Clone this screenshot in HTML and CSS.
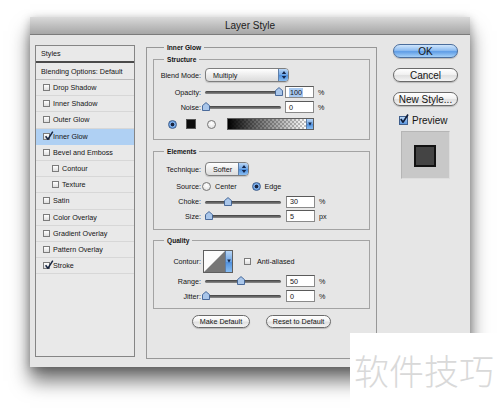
FILE: index.html
```html
<!DOCTYPE html>
<html>
<head>
<meta charset="utf-8">
<title>Layer Style</title>
<link rel="stylesheet" href="styles.css">
</head>
<body>
<div class="window">
  <div class="titlebar">Layer Style</div>
  <div class="content">
    <div class="styles-list">
      <div class="list-head">Styles</div>
      <div class="list-row blend">Blending Options: Default</div>
      <div class="list-row"><span class="cb"></span>Drop Shadow</div>
      <div class="list-row"><span class="cb"></span>Inner Shadow</div>
      <div class="list-row"><span class="cb"></span>Outer Glow</div>
      <div class="list-row selected"><span class="cb"><svg class="check" viewBox="0 0 10 10" width="10" height="10"><path d="M1.6 5.2 L3.9 8.3 L8.8 0.6" fill="none" stroke="#15233f" stroke-width="1.5" stroke-linejoin="round"/></svg></span>Inner Glow</div>
      <div class="list-row"><span class="cb"></span>Bevel and Emboss</div>
      <div class="list-row indent"><span class="cb"></span>Contour</div>
      <div class="list-row indent"><span class="cb"></span>Texture</div>
      <div class="list-row"><span class="cb"></span>Satin</div>
      <div class="list-row"><span class="cb"></span>Color Overlay</div>
      <div class="list-row"><span class="cb"></span>Gradient Overlay</div>
      <div class="list-row"><span class="cb"></span>Pattern Overlay</div>
      <div class="list-row"><span class="cb"><svg class="check" viewBox="0 0 10 10" width="10" height="10"><path d="M1.6 5.2 L3.9 8.3 L8.8 0.6" fill="none" stroke="#15233f" stroke-width="1.5" stroke-linejoin="round"/></svg></span>Stroke</div>
    </div>

    <fieldset class="main">
      <legend>Inner Glow</legend>

      <fieldset class="group g-structure">
        <legend>Structure</legend>
        <div class="rows">
          <div class="row">
            <span class="lbl">Blend Mode:</span>
            <div class="select w-blend"><span class="sel-text">Multiply</span><span class="stepper"><svg viewBox="0 0 6 10" width="6" height="10"><path d="M3 1 L5.2 4 H0.8 Z M3 9 L5.2 6 H0.8 Z" fill="#14264a"/></svg></span></div>
          </div>
          <div class="row">
            <span class="lbl">Opacity:</span>
            <div class="slider"><span class="knob" style="left:70px"><svg viewBox="0 0 8 9" width="8" height="9"><path d="M0.5 3.6 L4 0.6 L7.5 3.6 V8.5 H0.5 Z" fill="#a9c6ea" stroke="#3c5f92" stroke-width="0.9"/></svg></span></div>
            <span class="field"><span class="hl">100</span></span><span class="unit">%</span>
          </div>
          <div class="row">
            <span class="lbl">Noise:</span>
            <div class="slider"><span class="knob" style="left:-3px"><svg viewBox="0 0 8 9" width="8" height="9"><path d="M0.5 3.6 L4 0.6 L7.5 3.6 V8.5 H0.5 Z" fill="#a9c6ea" stroke="#3c5f92" stroke-width="0.9"/></svg></span></div>
            <span class="field">0</span><span class="unit">%</span>
          </div>
          <div class="row grad-row">
            <span class="radio on"></span>
            <span class="swatch"></span>
            <span class="radio"></span>
            <span class="gradbar"><span class="gradfill"></span><span class="drop"><svg viewBox="0 0 6 10" width="6" height="10"><path d="M1.2 3.5 H4.8 L3 6.8 Z" fill="#14264a"/></svg></span></span>
          </div>
        </div>
      </fieldset>

      <fieldset class="group g-elements">
        <legend>Elements</legend>
        <div class="rows">
          <div class="row">
            <span class="lbl">Technique:</span>
            <div class="select w-tech"><span class="sel-text">Softer</span><span class="stepper"><svg viewBox="0 0 6 10" width="6" height="10"><path d="M3 1 L5.2 4 H0.8 Z M3 9 L5.2 6 H0.8 Z" fill="#14264a"/></svg></span></div>
          </div>
          <div class="row">
            <span class="lbl">Source:</span>
            <span class="radio src-first"></span><span class="rlabel">Center</span>
            <span class="radio on src-second"></span><span class="rlabel">Edge</span>
          </div>
          <div class="row">
            <span class="lbl">Choke:</span>
            <div class="slider"><span class="knob" style="left:19px"><svg viewBox="0 0 8 9" width="8" height="9"><path d="M0.5 3.6 L4 0.6 L7.5 3.6 V8.5 H0.5 Z" fill="#a9c6ea" stroke="#3c5f92" stroke-width="0.9"/></svg></span></div>
            <span class="field wide">30</span><span class="unit">%</span>
          </div>
          <div class="row">
            <span class="lbl">Size:</span>
            <div class="slider"><span class="knob" style="left:0px"><svg viewBox="0 0 8 9" width="8" height="9"><path d="M0.5 3.6 L4 0.6 L7.5 3.6 V8.5 H0.5 Z" fill="#a9c6ea" stroke="#3c5f92" stroke-width="0.9"/></svg></span></div>
            <span class="field wide">5</span><span class="unit">px</span>
          </div>
        </div>
      </fieldset>

      <fieldset class="group g-quality">
        <legend>Quality</legend>
        <div class="rows">
          <div class="row">
            <span class="lbl">Contour:</span>
            <span class="contour"><svg class="curve" viewBox="0 0 22 22" width="22" height="21" preserveAspectRatio="none"><rect width="22" height="22" fill="#fbfbfb"/><path d="M0 22 L22 0 V22 Z" fill="#767676"/></svg><span class="drop tall"><svg viewBox="0 0 6 10" width="6" height="10"><path d="M1.2 3.5 H4.8 L3 6.8 Z" fill="#14264a"/></svg></span></span>
            <span class="cb aa"></span><span class="rlabel">Anti-aliased</span>
          </div>
          <div class="row">
            <span class="lbl">Range:</span>
            <div class="slider"><span class="knob" style="left:32px"><svg viewBox="0 0 8 9" width="8" height="9"><path d="M0.5 3.6 L4 0.6 L7.5 3.6 V8.5 H0.5 Z" fill="#a9c6ea" stroke="#3c5f92" stroke-width="0.9"/></svg></span></div>
            <span class="field wide">50</span><span class="unit">%</span>
          </div>
          <div class="row">
            <span class="lbl">Jitter:</span>
            <div class="slider"><span class="knob" style="left:-3px"><svg viewBox="0 0 8 9" width="8" height="9"><path d="M0.5 3.6 L4 0.6 L7.5 3.6 V8.5 H0.5 Z" fill="#a9c6ea" stroke="#3c5f92" stroke-width="0.9"/></svg></span></div>
            <span class="field wide">0</span><span class="unit">%</span>
          </div>
        </div>
      </fieldset>

      <div class="btn-row">
        <span class="pill small w-make">Make Default</span>
        <span class="pill small w-reset">Reset to Default</span>
      </div>
    </fieldset>

    <div class="side">
      <span class="pill big ok">OK</span>
      <span class="pill big">Cancel</span>
      <span class="pill big">New Style...</span>
      <div class="preview-row"><span class="pcb"><svg viewBox="0 0 10 10" width="10" height="10"><path d="M1.8 5 L4 8.2 L9 0.5" fill="none" stroke="#0f1d3a" stroke-width="1.6" stroke-linejoin="round"/></svg></span><span>Preview</span></div>
      <div class="preview-box"><div class="preview-square"></div></div>
    </div>
  </div>
</div>
<div class="watermark">软件技巧</div>
</body>
</html>
```

FILE: styles.css
```css
* { box-sizing: border-box; }
html, body { margin: 0; padding: 0; background: #fff; }
body {
  position: relative;
  width: 500px;
  height: 408px;
  overflow: hidden;
  padding: 17px 0 0 30px;
  font-family: "Liberation Sans", Arial, sans-serif;
  font-size: 7.2px;
  color: #141414;
}

.window {
  width: 440px;
  height: 350px;
  background: #e6e6e6;
  display: flex;
  flex-direction: column;
  box-shadow: 0 14px 18px rgba(0,0,0,0.55), 0 2px 9px rgba(0,0,0,0.25);
}

.titlebar {
  height: 18px;
  flex: none;
  display: flex;
  align-items: center;
  justify-content: center;
  font-size: 10px;
  color: #1c1c1c;
  background: linear-gradient(#dadada, #bdbdbd 55%, #a7a7a7);
  border-bottom: 1px solid #7c7c7c;
}

.content {
  flex: 1;
  display: flex;
  align-items: flex-start;
  padding-left: 5px;
}

/* ---------- styles list ---------- */
.styles-list {
  margin-top: 10px;
  width: 100px;
  height: 312px;
  border: 1px solid #858585;
  background: #e9e9e9;
}
.list-head {
  height: 17px;
  display: flex;
  align-items: center;
  padding-left: 5px;
  border-bottom: 2px solid #4a4a4a;
}
.list-row {
  height: 16.2px;
  display: flex;
  align-items: center;
  padding-left: 7px;
  border-bottom: 1px solid #d7d7d7;
}
.list-row.blend { height: 17px; padding-left: 5px; border-bottom-color: #bdbdbd; }
.list-row.indent { padding-left: 16px; }
.list-row.selected { background: #afd0f3; border-bottom-color: #afd0f3; }

.cb {
  position: relative;
  flex: none;
  width: 7px;
  height: 7px;
  margin-right: 3px;
  border: 1px solid #7b7b7b;
  background: linear-gradient(#ffffff, #dedede);
}
.cb .check { position: absolute; left: 0; top: -3px; }

/* ---------- main panel ---------- */
fieldset { margin: 0; min-width: 0; }
legend { font-weight: bold; font-size: 6.6px; line-height: 9px; padding: 0 3px; }

.main {
  margin: 7.5px 0 0 11px;
  width: 231px;
  height: 316.5px;
  padding: 0 6px;
  border: 1px solid #979797;
}
.main > legend { margin-left: 11px; }

.group {
  padding: 0;
  border: 1px solid #a3a3a3;
}
.group > legend { margin-left: 10px; }
.g-structure { margin-top: 3px; padding: 3.5px 0 4px; }
.g-elements { margin-top: 6.5px; padding: 4.5px 0 5px; }
.g-quality { margin-top: 5.5px; padding: 3.5px 0 4px; }

.rows { display: grid; }
.g-structure .rows { grid-template-rows: 16px 18px 12px 22px; }
.g-elements .rows { grid-template-rows: 18px 17px 13px 16px; }
.g-quality .rows { grid-template-rows: 26px 14px 16px; }

.row { display: flex; align-items: center; }
.lbl { flex: none; width: 47px; text-align: right; margin-right: 4px; }

.select {
  display: flex;
  align-items: stretch;
  height: 14px;
  border: 1px solid #7e7e7e;
  border-radius: 4px;
  overflow: hidden;
  background: linear-gradient(#ffffff, #e9e9e9 60%, #dcdcdc);
  box-shadow: 0 1px 1px rgba(0,0,0,0.15);
}
.w-blend { width: 84px; }
.w-tech { width: 44px; }
.sel-text { flex: 1; padding-left: 7px; display: flex; align-items: center; }
.stepper {
  width: 10px;
  display: flex;
  align-items: center;
  justify-content: center;
  background: linear-gradient(#b9d6f6, #6ea6e6 50%, #4d8fde 51%, #88bdf2);
  border-left: 1px solid #5f7fa8;
}

.slider {
  position: relative;
  flex: none;
  width: 76px;
  height: 10px;
}
.slider::before {
  content: "";
  position: absolute;
  left: 0;
  right: 0;
  top: 4px;
  height: 3px;
  border-radius: 2px;
  background: linear-gradient(#3f3f3f, #8d8d8d);
}
.knob { position: absolute; top: 0; width: 8px; height: 9px; display: block; }
.knob svg { display: block; }

.field {
  flex: none;
  width: 29px;
  height: 12px;
  margin-left: 4px;
  padding-left: 3px;
  display: flex;
  align-items: center;
  background: #fff;
  border: 1px solid #8a8a8a;
  border-top-color: #5a5a5a;
}
.field.wide { margin-left: 5px; }
.hl { background: #a9caf1; padding: 0 1px; }
.unit { margin-left: 4px; }

.radio {
  flex: none;
  width: 9px;
  height: 9px;
  border-radius: 50%;
  border: 1px solid #767676;
  background: radial-gradient(circle at 50% 35%, #ffffff, #dcdcdc);
}
.radio.on {
  border-color: #3f5f8d;
  background: radial-gradient(circle, #1a2540 0 1.6px, #7fb0ea 2.2px, #5d95dc 4px);
}
.grad-row .radio.on { margin-left: 14px; }
.swatch {
  flex: none;
  width: 10px;
  height: 10px;
  margin-left: 9px;
  background: #0d0d0d;
  border: 1px solid #555;
}
.grad-row .swatch + .radio { margin-left: 11px; }
.gradbar {
  flex: none;
  display: flex;
  width: 87px;
  height: 12px;
  margin-left: 11px;
  border: 1px solid #5e5e5e;
}
.gradfill {
  flex: 1;
  background:
    linear-gradient(to right, #000 0%, rgba(0,0,0,0.6) 35%, rgba(0,0,0,0) 100%),
    repeating-conic-gradient(#c4c4c4 0 25%, #ffffff 0 50%) 0 0 / 4px 4px;
}
.drop {
  width: 7px;
  display: flex;
  align-items: center;
  justify-content: center;
  background: linear-gradient(#b9d6f6, #6ea6e6 50%, #4d8fde 51%, #88bdf2);
  border-left: 1px solid #5f7fa8;
}

.src-first { margin-left: -3px; }
.rlabel { margin-left: 4px; }
.src-second { margin-left: 15px; }

.contour {
  flex: none;
  display: flex;
  height: 23px;
  width: 30px;
  margin-left: -2px;
  border: 1px solid #5e5e5e;
}
.contour .curve { display: block; flex: 1; width: 22px; height: 21px; }
.drop.tall { width: 7px; }
.cb.aa { margin-left: 11px; margin-right: 2px; }

.btn-row {
  display: flex;
  justify-content: center;
  gap: 16px;
  margin-top: 6px;
}

.pill {
  display: flex;
  align-items: center;
  justify-content: center;
  border: 1px solid #6a6a6a;
  border-radius: 8px;
  background: linear-gradient(#ffffff, #f2f2f2 45%, #e0e0e0 55%, #f4f4f4);
  box-shadow: 0 1px 1px rgba(0,0,0,0.2);
}
.pill.small { height: 13px; font-size: 7.2px; }
.w-make { width: 58px; }
.w-reset { width: 65px; }

/* ---------- side column ---------- */
.side {
  margin: 9px 0 0 16px;
  width: 65px;
  display: flex;
  flex-direction: column;
}
.pill.big { height: 14px; font-size: 10px; margin-bottom: 10px; }
.pill.ok {
  border-color: #4a6d9c;
  background: linear-gradient(#d0e6fc, #8fbdf1 45%, #5f9de6 55%, #a5d0f8);
}
.preview-row {
  display: flex;
  align-items: center;
  height: 12px;
  margin-top: -2px;
  font-size: 10px;
}
.pcb {
  position: relative;
  width: 9px;
  height: 9px;
  margin: 0 4px 0 6px;
  border: 1px solid #3f5f8d;
  background: linear-gradient(#b9d6f6, #5d98e0);
}
.pcb svg { position: absolute; left: -1px; top: -3px; }
.preview-box {
  margin: 5px 0 0 8px;
  width: 49px;
  height: 48px;
  padding: 13px 0 0 12px;
  background: #c8c8c8;
  border: 1px solid #b5b5b5;
  border-right-color: #dedede;
  border-bottom-color: #dedede;
}
.preview-square {
  width: 22px;
  height: 22px;
  background: #444;
  border: 2px solid #121212;
}

/* ---------- watermark ---------- */
.watermark {
  position: absolute;
  left: 350px;
  top: 333px;
  width: 150px;
  height: 75px;
  background: #fff;
  padding: 19px 0 0 4px;
  font-family: "Noto Sans CJK SC", sans-serif;
  font-size: 35px;
  font-weight: 300;
  line-height: 1;
  color: #d9d9d9;
  white-space: nowrap;
}
```
